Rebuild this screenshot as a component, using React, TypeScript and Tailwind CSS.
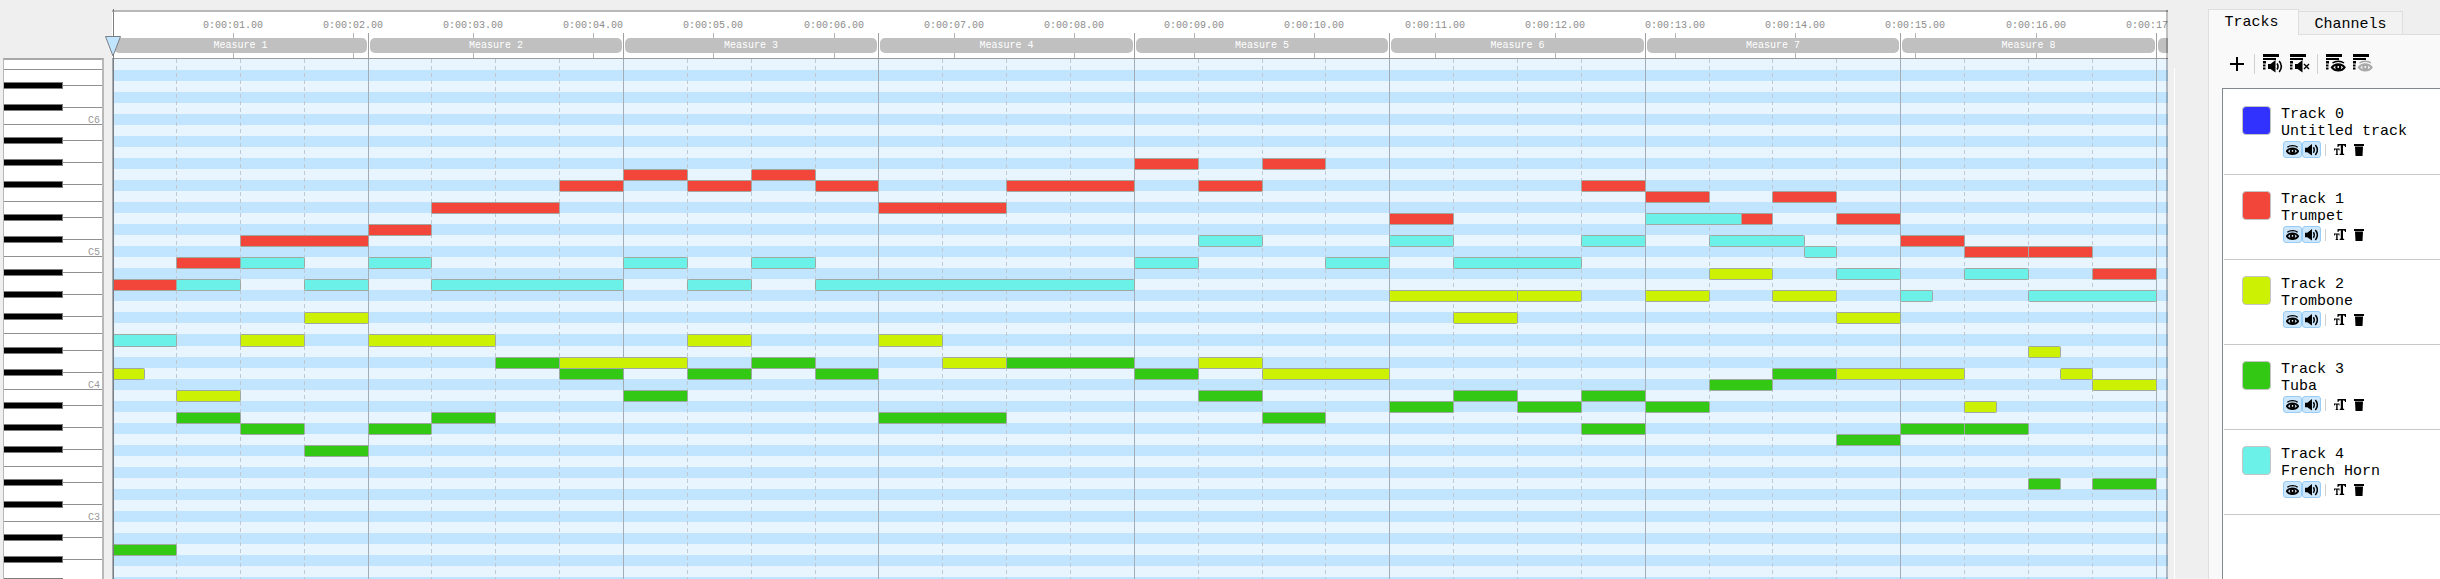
import React from "react";

const BEAT = 63.86;
const SECOND = 120.2;
const ROW = 11;
const ROWS = 48;
const MEASURES = 8;

const beatX = (beat: number) => Math.floor(0.6 + beat * BEAT);
const secondX = (second: number) => Math.floor(0.8 + second * SECOND);
const rowY = (row: number) => row * ROW + (row > 25 ? 1 : 0);

type Note = [start: number, length: number, row: number];

type Track = { name: string; label: string; color: string; swatch: string; notes: Note[] };

const tracks: Track[] = [
  { name: "Track 0", label: "Untitled track", color: "#3232ff", swatch: "bg-[#3232ff]", notes: [] },
  {
    name: "Track 1",
    label: "Trumpet",
    color: "#f3463a",
    swatch: "bg-[#f3463a]",
    notes: [
      [0, 1, 20], [1, 1, 18], [2, 2, 16], [4, 1, 15], [5, 2, 13], [7, 1, 11], [8, 1, 10], [9, 1, 11],
      [10, 1, 10], [11, 1, 11], [12, 2, 13], [14, 2, 11], [16, 1, 9], [17, 1, 11], [18, 1, 9], [20, 1, 14],
      [23, 1, 11], [24, 1, 12], [25, 1, 14], [26, 1, 12], [27, 1, 14], [28, 1, 16], [29, 1, 17], [30, 1, 17],
      [31, 1, 19],
    ],
  },
  {
    name: "Track 2",
    label: "Trombone",
    color: "#cdf103",
    swatch: "bg-[#cdf103]",
    notes: [
      [0, 0.5, 28], [1, 1, 30], [2, 1, 25], [3, 1, 23], [4, 2, 25], [7, 2, 27], [9, 1, 25], [12, 1, 25],
      [13, 1, 27], [17, 1, 27], [18, 2, 28], [20, 2, 21], [21, 1, 23], [22, 1, 21], [24, 1, 21], [25, 1, 19],
      [26, 1, 21], [27, 1, 23], [27, 2, 28], [29, 0.5, 31], [30, 0.5, 26], [30.5, 0.5, 28], [31, 1, 29],
    ],
  },
  {
    name: "Track 3",
    label: "Tuba",
    color: "#32c814",
    swatch: "bg-[#32c814]",
    notes: [
      [0, 1, 44], [1, 1, 32], [2, 1, 33], [3, 1, 35], [4, 1, 33], [5, 1, 32], [6, 1, 27], [7, 1, 28],
      [8, 1, 30], [9, 1, 28], [10, 1, 27], [11, 1, 28], [12, 2, 32], [14, 2, 27], [16, 1, 28], [17, 1, 30],
      [18, 1, 32], [20, 1, 31], [21, 1, 30], [22, 1, 31], [23, 1, 30], [23, 1, 33], [24, 1, 31], [25, 1, 29],
      [26, 1, 28], [27, 1, 34], [28, 1, 33], [29, 1, 33], [30, 0.5, 38], [31, 1, 38],
    ],
  },
  {
    name: "Track 4",
    label: "French Horn",
    color: "#6cf1e8",
    swatch: "bg-[#6cf1e8]",
    notes: [
      [0, 1, 25], [1, 1, 20], [2, 1, 18], [3, 1, 20], [4, 1, 18], [5, 3, 20], [8, 1, 18], [9, 1, 20],
      [10, 1, 18], [11, 5, 20], [16, 1, 18], [17, 1, 16], [19, 1, 18], [20, 1, 16], [21, 2, 18], [23, 1, 16],
      [24, 1.5, 14], [25, 1.5, 16], [26.5, 0.5, 17], [27, 1, 19], [28, 0.5, 21], [29, 1, 19], [30, 2, 21],
    ],
  },
];

const range = (n: number) => Array.from({ length: n }, (_, i) => i);

/* Row 0 is F6; the pitch class falls by one with each row. */
const pitchOf = (row: number) => (((5 - row) % 12) + 12) % 12;
const isBlack = (row: number) => [1, 3, 6, 8, 10].includes(pitchOf(row));

function Piano() {
  return (
    <div className="relative min-h-0 flex-1 overflow-hidden border-t-2 border-r-2 border-l border-t-[#a8a8a8] border-r-[#b8b8b8] border-l-[#b8b8b8] bg-white">
      <svg className="absolute inset-0 h-full w-full" shapeRendering="crispEdges" aria-hidden="true">
        {range(ROWS).map((row) => {
          const y = rowY(row) - 1;
          if (isBlack(row)) {
            return (
              <g key={row}>
                <rect x="0" y={y + 4} width="100%" height="1" fill="#909090" />
                <rect x="0" y={y + 1} width="59" height="7" fill="#7c7c7c" />
                <rect x="0" y={y + 2} width="58" height="5" fill="#000" />
              </g>
            );
          }
          const pitch = pitchOf(row);
          return pitch === 0 || pitch === 5 ? (
            <rect key={row} x="0" y={y + 10} width="100%" height="1" fill="#909090" />
          ) : null;
        })}
      </svg>
      {range(ROWS)
        .filter((row) => pitchOf(row) === 0)
        .map((row) => (
          <span
            key={row}
            className="absolute right-0.5 text-[10px] leading-[11px] text-[#999]"
            style={{ top: rowY(row) }}
          >
            C{6 - Math.floor(row / 12)}
          </span>
        ))}
    </div>
  );
}

function Ruler() {
  return (
    <div className="relative h-12 shrink-0 overflow-hidden border-t-2 border-[#b8b8b8] bg-white">
      <svg className="absolute inset-0 h-full w-full" shapeRendering="crispEdges" aria-hidden="true">
        {range(17).map((s) => (
          <rect key={s} x={secondX(s + 1)} y="21" width="1" height="26" fill="#b4b4b4" />
        ))}
        {range(MEASURES).map((m) => (
          <rect key={m} x={beatX(4 * m + 4)} y="21" width="1" height="26" fill="#a0a0a0" />
        ))}
      </svg>
      {range(17).map((s) => (
        <span
          key={s}
          className="absolute top-1.5 w-20 -translate-x-1/2 text-center text-[10px] leading-4 text-[#8c8c8c]"
          style={{ left: secondX(s + 1) }}
        >
          0:00:{String(s + 1).padStart(2, "0")}.00
        </span>
      ))}
      {range(MEASURES).map((m) => (
        <div
          key={m}
          className="absolute top-[26px] h-[15px] rounded-[5px] bg-[#c0c0c0] text-center text-[10px] leading-4 text-white"
          style={{ left: beatX(4 * m) + 2, width: beatX(4 * m + 4) - beatX(4 * m) - 3 }}
        >
          Measure {m + 1}
        </div>
      ))}
      <div
        className="absolute top-[26px] right-0 h-[15px] rounded-l-[5px] bg-[#c0c0c0]"
        style={{ left: beatX(4 * MEASURES) + 2 }}
      />
    </div>
  );
}

function NoteGrid() {
  return (
    <svg className="min-h-0 w-full flex-1 border-t border-[#9c9c9c]" shapeRendering="crispEdges" role="img" aria-label="Notes">
      {range(ROWS).map((row) => (
        <rect
          key={row}
          x="0"
          y={rowY(row)}
          width="100%"
          height={rowY(row + 1) - rowY(row)}
          fill={row % 2 ? "#c2e5ff" : "#e8f5ff"}
        />
      ))}
      {range(33).map((beat) => (
        <line
          key={beat}
          x1={beatX(beat) + 0.5}
          x2={beatX(beat) + 0.5}
          y1="0"
          y2="100%"
          stroke={beat % 4 ? "#c0c9d2" : "#a4adb6"}
          strokeDasharray={beat % 4 ? "4 3" : undefined}
        />
      ))}
      {tracks.map((track) =>
        track.notes.map(([start, length, row]) => (
          <rect
            key={`${track.name}-${start}-${row}`}
            x={beatX(start) + 0.5}
            y={rowY(row) + 0.5}
            width={beatX(start + length) - beatX(start)}
            height={rowY(row + 1) - rowY(row)}
            rx="1"
            fill={track.color}
            stroke="#a0a8a4"
            shapeRendering="auto"
          />
        )),
      )}
    </svg>
  );
}

function Playhead() {
  return (
    <svg className="pointer-events-none absolute inset-y-0 -left-[7px] h-full w-[17px]" aria-hidden="true">
      <rect x="8" y="0" width="1" height="100%" fill="#7d7d7d" />
      <path d="M0.500 27.500H15.500L8 47Z" fill="#c2e5ff" stroke="#7a7f84" />
    </svg>
  );
}

function Eye() {
  return (
    <g fill="none" stroke="currentColor">
      <path d="M1.500 3C4.500.6 10 .6 13 3" strokeWidth="1.500" />
      <path d="M.8 7.400C3.800 3.200 10.700 3.200 13.700 7.400C10.700 11.600 3.800 11.600.8 7.400Z" strokeWidth="1.900" />
      <circle cx="7.250" cy="7.200" r="3" fill="currentColor" stroke="none" />
      <circle cx="7.250" cy="7" r=".9" fill="#fff" stroke="none" />
    </g>
  );
}

function Speaker({ muted = false }: { muted?: boolean }) {
  return (
    <g fill="none" stroke="currentColor">
      <path d="M0 4H2.500L7.500 0V12.500L2.500 9H0Z" fill="currentColor" stroke="none" />
      {muted ? (
        <path d="M9 4L14 9M14 4L9 9" strokeWidth="1.400" />
      ) : (
        <path d="M9 3.500Q11 6.500 9 9.500M11.200 1Q15.500 6.500 11.200 12" strokeWidth="1.600" />
      )}
    </g>
  );
}

function ListBadge({ children, faded = false }: { children: React.ReactNode; faded?: boolean }) {
  return (
    <svg width="20" height="20" viewBox="0 0 20 20" aria-hidden="true">
      <path d="M0 0H16V3H0ZM0 4H13V6H0ZM0 7H3V9.500H0ZM0 10.500H2.500V12.500H0ZM0 13.500H2.500V15.500H0Z" fill="#000" />
      <g transform="translate(5 6)" className={faded ? "text-[#a8a8a8]" : "text-black"}>
        {children}
      </g>
    </svg>
  );
}

function ToolButton({ label, children }: { label: string; children: React.ReactNode }) {
  return (
    <button type="button" aria-label={label} className="flex h-6 w-[27px] items-center justify-center">
      {children}
    </button>
  );
}

function Toolbar() {
  return (
    <div className="flex h-[53px] items-center pt-1 pl-px">
      <ToolButton label="Add track">
        <svg width="14" height="14" viewBox="0 0 14 14" aria-hidden="true">
          <path d="M7 0V14M0 7H14" stroke="#000" strokeWidth="2" />
        </svg>
      </ToolButton>
      <span className="mx-1 h-5 w-px bg-[#d0d0d0]" />
      <ToolButton label="Unmute all tracks">
        <ListBadge>
          <Speaker />
        </ListBadge>
      </ToolButton>
      <ToolButton label="Mute all tracks">
        <ListBadge>
          <Speaker muted />
        </ListBadge>
      </ToolButton>
      <span className="mx-1 h-5 w-px bg-[#d0d0d0]" />
      <ToolButton label="Show all tracks">
        <ListBadge>
          <Eye />
        </ListBadge>
      </ToolButton>
      <ToolButton label="Hide all tracks">
        <ListBadge faded>
          <Eye />
        </ListBadge>
      </ToolButton>
    </div>
  );
}

const toggle =
  "flex h-[17px] w-[19px] items-center justify-center rounded-[3px] border border-[#99ccf5] bg-[#cce6fc]";

function TrackItem({ track }: { track: Track }) {
  return (
    <li className="flex h-[85px] items-start gap-2.5 border-b border-[#c8c8c8] pt-4 pl-[18px]">
      <span className={`h-[29px] w-[29px] shrink-0 rounded-[4px] border border-[#c4c4c4] ${track.swatch}`} />
      <div>
        <p className="text-[15px] leading-[17px] whitespace-nowrap text-black">{track.name}</p>
        <p className="text-[15px] leading-[17px] whitespace-nowrap text-black">{track.label}</p>
        <div className="mt-px flex items-center pl-0.5">
          <button type="button" aria-label={`Show ${track.name}`} aria-pressed="true" className={toggle}>
            <svg width="13" height="12" viewBox="0 0 14.500 12" aria-hidden="true">
              <Eye />
            </svg>
          </button>
          <button type="button" aria-label={`Play ${track.name}`} aria-pressed="true" className={toggle}>
            <svg width="13" height="12" viewBox="0 0 14 13" aria-hidden="true">
              <Speaker />
            </svg>
          </button>
          <span className="mx-1 h-3 w-px bg-[#d0d0d0]" />
          <button type="button" aria-label={`Rename ${track.name}`} className="flex h-4 w-[19px] items-center justify-center">
            <svg width="12" height="11" viewBox="0 0 12 11" aria-hidden="true">
              <path
                d="M3.500 0H12V3H11.200Q11 1.200 9 1.200V9.500L10.200 10V11H5.600V10L6.800 9.500V1.200Q4.500 1.200 4.300 3H3.500ZM0 4.500H5.500V6.500H4.900L4.500 5.500H3.600V10L4.300 10.400V11H1.500V10.400L2.200 10V5.500H1.100L.6 6.500H0Z"
                fill="#000"
              />
            </svg>
          </button>
          <button type="button" aria-label={`Remove ${track.name}`} className="flex h-4 w-[19px] items-center justify-center">
            <svg width="10" height="12" viewBox="0 0 10 12" aria-hidden="true">
              <path d="M0 0H10V2H0ZM1 2.500H9L8.500 12H1.500Z" fill="#000" />
            </svg>
          </button>
        </div>
      </div>
    </li>
  );
}

function SidePanel() {
  return (
    <aside className="flex w-[232px] shrink-0 flex-col pt-[9px]">
      <div role="tablist" className="flex h-[25px] items-end text-[15px] text-black">
        <button
          type="button"
          role="tab"
          aria-selected="true"
          className="relative -mb-px h-[26px] w-[91px] border border-b-0 border-[#dedede] bg-[#f9f9f9] pr-1 leading-[26px]"
        >
          Tracks
        </button>
        <button
          type="button"
          role="tab"
          aria-selected="false"
          className="h-[23px] w-[104px] border border-b-0 border-l-0 border-[#dedede] bg-[#f2f2f2] leading-[26px]"
        >
          Channels
        </button>
      </div>
      <div className="flex min-h-0 flex-1 flex-col border-t border-l border-[#dedede] bg-[#f9f9f9] pl-[13px]">
        <Toolbar />
        <ul className="min-h-0 flex-1 overflow-hidden border-t border-l border-[#828790] bg-white pt-px pl-px">
          {tracks.map((track) => (
            <TrackItem key={track.name} track={track} />
          ))}
        </ul>
      </div>
    </aside>
  );
}

export default function App() {
  return (
    <main className="flex h-screen overflow-hidden bg-[#efefef] font-['Liberation_Mono',monospace]">
      <div className="flex w-28 shrink-0 flex-col pt-[58px] pr-2 pl-[3px]">
        <Piano />
      </div>
      <div className="relative flex min-w-0 flex-1 flex-col pt-2.5">
        <Ruler />
        <NoteGrid />
        <div className="absolute top-2.5 right-0 bottom-0 w-0.5 bg-black/25" />
        <div className="pointer-events-none absolute inset-x-0 top-[9px] bottom-0">
          <Playhead />
        </div>
      </div>
      <div className="w-10 shrink-0 pt-[68px] pl-1.5">
        <div className="h-full border-l border-white" />
      </div>
      <SidePanel />
    </main>
  );
}
